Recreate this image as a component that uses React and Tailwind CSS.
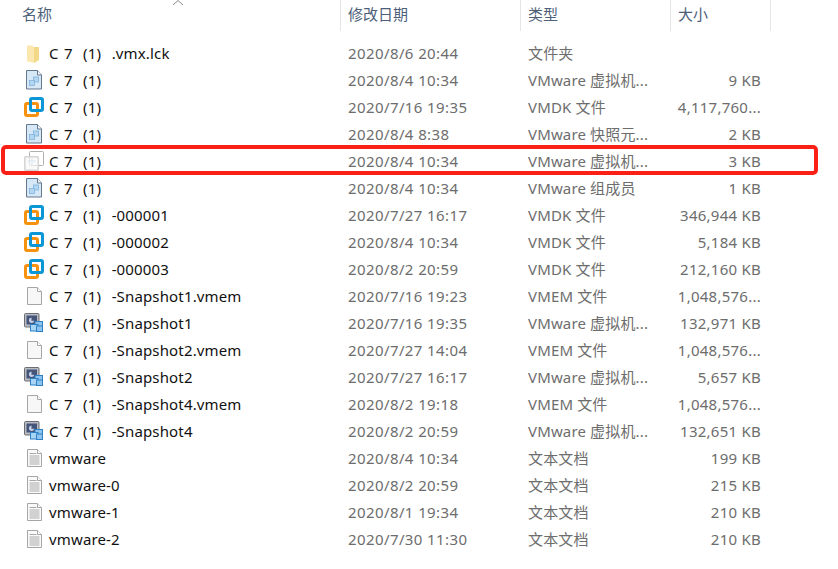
import React from 'react'

const files = [
    { icon: 'folder', name: 'C 7  (1)  .vmx.lck', date: '2020/8/6 20:44', type: '文件夹', size: '' },
    { icon: 'config', name: 'C 7  (1)', date: '2020/8/4 10:34', type: 'VMware 虚拟机...', size: '9 KB' },
    { icon: 'disk', name: 'C 7  (1)', date: '2020/7/16 19:35', type: 'VMDK 文件', size: '4,117,760...' },
    { icon: 'config', name: 'C 7  (1)', date: '2020/8/4 8:38', type: 'VMware 快照元...', size: '2 KB' },
    { icon: 'ghost', name: 'C 7  (1)', date: '2020/8/4 10:34', type: 'VMware 虚拟机...', size: '3 KB' },
    { icon: 'config', name: 'C 7  (1)', date: '2020/8/4 10:34', type: 'VMware 组成员', size: '1 KB' },
    { icon: 'disk', name: 'C 7  (1)  -000001', date: '2020/7/27 16:17', type: 'VMDK 文件', size: '346,944 KB' },
    { icon: 'disk', name: 'C 7  (1)  -000002', date: '2020/8/4 10:34', type: 'VMDK 文件', size: '5,184 KB' },
    { icon: 'disk', name: 'C 7  (1)  -000003', date: '2020/8/2 20:59', type: 'VMDK 文件', size: '212,160 KB' },
    { icon: 'blank', name: 'C 7  (1)  -Snapshot1.vmem', date: '2020/7/16 19:23', type: 'VMEM 文件', size: '1,048,576...' },
    { icon: 'snapshot', name: 'C 7  (1)  -Snapshot1', date: '2020/7/16 19:35', type: 'VMware 虚拟机...', size: '132,971 KB' },
    { icon: 'blank', name: 'C 7  (1)  -Snapshot2.vmem', date: '2020/7/27 14:04', type: 'VMEM 文件', size: '1,048,576...' },
    { icon: 'snapshot', name: 'C 7  (1)  -Snapshot2', date: '2020/7/27 16:17', type: 'VMware 虚拟机...', size: '5,657 KB' },
    { icon: 'blank', name: 'C 7  (1)  -Snapshot4.vmem', date: '2020/8/2 19:18', type: 'VMEM 文件', size: '1,048,576...' },
    { icon: 'snapshot', name: 'C 7  (1)  -Snapshot4', date: '2020/8/2 20:59', type: 'VMware 虚拟机...', size: '132,651 KB' },
    { icon: 'text', name: 'vmware', date: '2020/8/4 10:34', type: '文本文档', size: '199 KB' },
    { icon: 'text', name: 'vmware-0', date: '2020/8/2 20:59', type: '文本文档', size: '215 KB' },
    { icon: 'text', name: 'vmware-1', date: '2020/8/1 19:34', type: '文本文档', size: '210 KB' },
    { icon: 'text', name: 'vmware-2', date: '2020/7/30 11:30', type: '文本文档', size: '210 KB' },
]

const FileIcon = ({ type }) => {
    if (type === 'folder') {
        return (
            <svg width="20" height="20" viewBox="0 0 20 20">
                <path d="M3 2.500h5.500l1.500 1.500v16L6 19l-3-.5z" fill="#fbe8b0" />
                <path d="M10 4h5v13l-5 3z" fill="#f3d987" />
            </svg>
        )
    }
    if (type === 'config') {
        return (
            <svg width="20" height="20" viewBox="0 0 20 20">
                <path d="M2.500 .5h11l4 4.500v14h-15z" fill="#d6e8f6" stroke="#65788f" />
                <path d="M13.500 .5V5h4" fill="#f4f7fa" stroke="#65788f" />
                <rect x="9.500" y="7" width="5" height="5" fill="#b5d6f0" stroke="#7fb2dc" strokeWidth="0.800" />
                <rect x="5.500" y="10.500" width="5" height="5" fill="#b5d6f0" stroke="#7fb2dc" strokeWidth="0.800" />
            </svg>
        )
    }
    if (type === 'disk') {
        return (
            <svg width="20" height="20" viewBox="0 0 20 20">
                <rect x="1.500" y="6.500" width="12" height="12" rx="1.500" fill="none" stroke="#f7920f" strokeWidth="3" />
                <rect x="6.500" y="1.500" width="12" height="12" rx="1.500" fill="none" stroke="#0b97d6" strokeWidth="3" />
            </svg>
        )
    }
    if (type === 'ghost') {
        return (
            <svg width="20" height="20" viewBox="0 0 20 20">
                <rect x="5.500" y=".5" width="14" height="14" rx="1" fill="#ffffff" stroke="#b0b0b0" />
                <rect x=".8" y="5.800" width="13.500" height="13.500" rx="1" fill="#f8f8f8" fillOpacity="0.700" stroke="#d4d4d4" strokeWidth="1.500" />
                <path d="M8 6v8M4 10h8" stroke="#dbe6ee" fill="none" />
            </svg>
        )
    }
    if (type === 'blank') {
        return (
            <svg width="20" height="20" viewBox="0 0 20 20">
                <path d="M3.500 1.500h10l4 4v13h-14z" fill="#f7f7f7" stroke="#a6a6a6" />
                <path d="M13.500 1.500v4h4" fill="#ffffff" stroke="#a6a6a6" />
            </svg>
        )
    }
    if (type === 'snapshot') {
        return (
            <svg width="20" height="20" viewBox="0 0 20 20">
                <rect x=".5" y=".5" width="14.500" height="13.500" rx="1" fill="#b9bcc2" stroke="#6b6d72" />
                <rect x="2.500" y="2.500" width="10.500" height="9" fill="#45557a" />
                <path d="M7.500 4.500a2.700 2.700 0 1 0 2.700 3.200H7.500z" fill="#c2cfe6" />
                <rect x="11" y="8.500" width="7.500" height="6.500" fill="#8cc4ef" stroke="#2f7fc4" />
                <rect x="6.500" y="11.500" width="7.500" height="6.500" fill="#a9d5f5" stroke="#2f7fc4" />
                <rect x="12.500" y="13" width="6" height="5.500" fill="#8cc4ef" stroke="#2f7fc4" />
            </svg>
        )
    }
    return (
        <svg width="20" height="20" viewBox="0 0 20 20">
            <path d="M3.500 1.500h10l4 4v13h-14z" fill="#fafafa" stroke="#a6a6a6" />
            <path d="M13.500 1.500v4h4" fill="#ffffff" stroke="#a6a6a6" />
            <path d="M5.500 5.500h7M5.500 8h10M5.500 10h10M5.500 12h10M5.500 14h10M5.500 16h10" stroke="#a9a9a9" fill="none" />
        </svg>
    )
}

const HeaderCell = ({ label, className }) => (
    <div className={`flex h-full items-center pb-[2px] text-[15px] text-[#4c607a] ${className}`}>{label}</div>
)

export default function App() {
    return (
        <div
            className="relative h-[569px] w-[838px] overflow-hidden bg-white"
            style={{ fontFamily: '"Noto Sans", "Noto Sans CJK SC", sans-serif' }}
        >
            {/* sort arrow */}
            <svg className="absolute left-[172px] top-0" width="12" height="5" viewBox="0 0 12 5">
                <path d="M1 5l5-4.500L11 5" fill="none" stroke="#8a8a8a" />
            </svg>

            <div className="flex h-[31px]">
                <HeaderCell label="名称" className="w-[340px] pl-[22px]" />
                <HeaderCell label="修改日期" className="w-[180px] border-l border-[#e5e5e5] pl-[7px]" />
                <HeaderCell label="类型" className="w-[150px] border-l border-[#e5e5e5] pl-[7px]" />
                <HeaderCell label="大小" className="w-[101px] border-x border-[#e5e5e5] pl-[7px]" />
            </div>

            <div className="mt-[9px] flex flex-col">
                {files.map((file, i) => (
                    <div key={i} className="flex h-[27px] items-center text-[15px] leading-[27px]">
                        <div className="flex w-[348px] items-center pl-[24px]">
                            <div className="w-[25px] shrink-0 -translate-y-px">
                                <FileIcon type={file.icon} />
                            </div>
                            <span className="whitespace-pre text-[#111111] tracking-[0.15px] [word-spacing:1.2px]">{file.name}</span>
                        </div>
                        <div className="w-[180px] tracking-[0.4px] text-[#6d6d6d]">{file.date}</div>
                        <div className="w-[130px] whitespace-nowrap tracking-[0.15px] text-[#6d6d6d]">{file.type}</div>
                        <div className="w-[103px] whitespace-nowrap text-right tracking-[0.25px] text-[#6d6d6d]">{file.size}</div>
                    </div>
                ))}
            </div>

            {/* red highlight */}
            <div className="absolute left-[1px] top-[145px] h-[30px] w-[817px] rounded-[5px] border-[4px] border-[#fb2015]" />
        </div>
    )
}
